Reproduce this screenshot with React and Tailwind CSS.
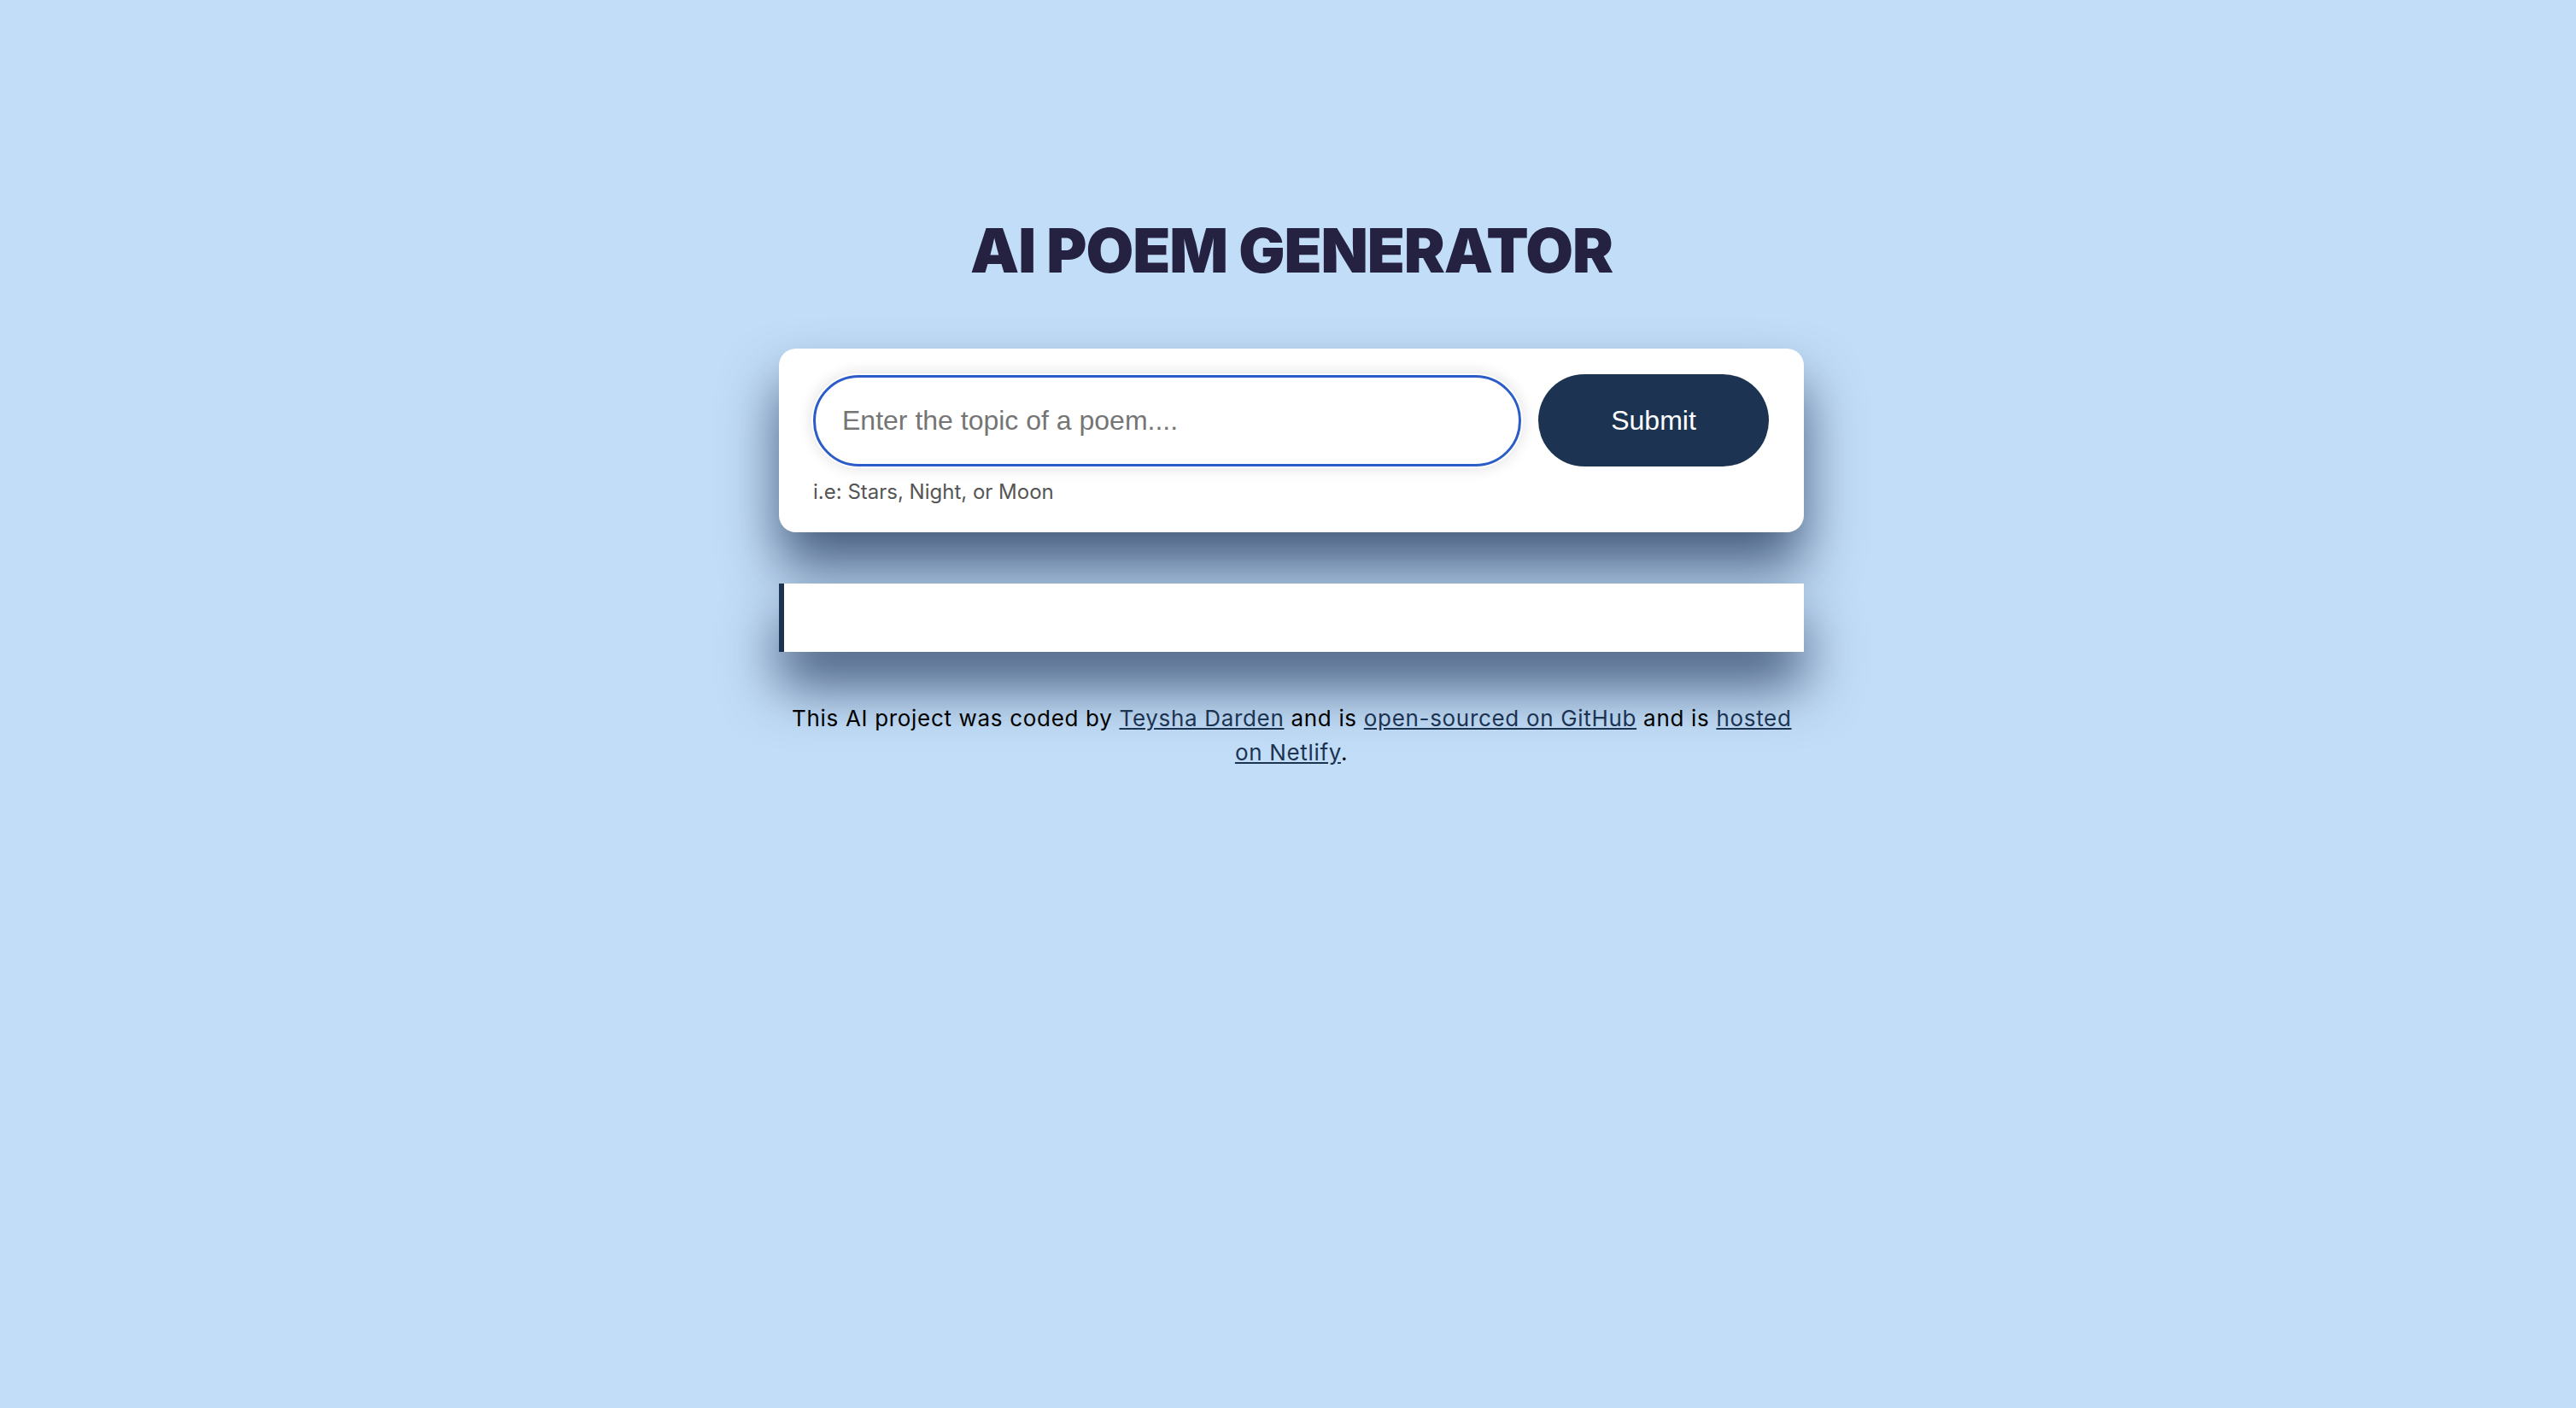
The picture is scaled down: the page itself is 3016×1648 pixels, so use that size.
export default function App() {
  return (
    <div className="min-h-[1648px] w-full bg-[#c2ddf7] pl-2">
      <div className="mx-auto w-[1200px] pt-[257px] pb-20 font-['Inter',sans-serif]">
        <h1 className="text-center text-[72px] leading-[72px] font-black tracking-[-1.1px] text-[#252141]">
          AI POEM GENERATOR
        </h1>

        <form
          className="mt-[79px] rounded-[20px] bg-white px-[40px] pt-[30px] pb-[29px] shadow-[0_40px_64px_rgba(30,50,85,0.75)]"
          onSubmit={(e) => e.preventDefault()}
        >
          <div className="flex items-center gap-[20px]">
            <input
              type="text"
              placeholder="Enter the topic of a poem...."
              className="h-[107px] w-[829px] rounded-full border-[3px] border-[#2b5cc8] bg-white pl-[31px] pr-6 font-['Liberation_Sans',Arial,sans-serif] text-[32px] text-black outline-none placeholder:text-[#757575] shadow-[0_0_0_2px_#ffffff,0_0_16px_4px_rgba(0,0,0,0.10)]"
            />
            <button
              type="submit"
              className="h-[108px] w-[270px] rounded-full bg-[#1c3352] font-['Liberation_Sans',Arial,sans-serif] text-[32px] text-white"
            >
              Submit
            </button>
          </div>
          <p className="mt-[12px] text-[24px] leading-[36px] text-[#555555]">
            i.e: Stars, Night, or Moon
          </p>
        </form>

        <div className="mt-[60px] h-[80px] border-l-[6px] border-[#1c3352] bg-white shadow-[0_40px_64px_rgba(30,50,85,0.75)]"></div>

        <footer className="mt-[58px] px-[15px] text-center text-[26px] leading-[40px] tracking-[0.68px] text-black">
          <span className="whitespace-nowrap">
            This AI project was coded by{" "}
            <a href="#" className="text-[#1c3352] underline">
              Teysha Darden
            </a>{" "}
            and is{" "}
            <a href="#" className="text-[#1c3352] underline">
              open-sourced on GitHub
            </a>{" "}
            and is{" "}
          </span>
          <a href="#" className="text-[#1c3352] underline">
            hosted
            <br />
            on Netlify
          </a>
          .
        </footer>
      </div>
    </div>
  );
}
